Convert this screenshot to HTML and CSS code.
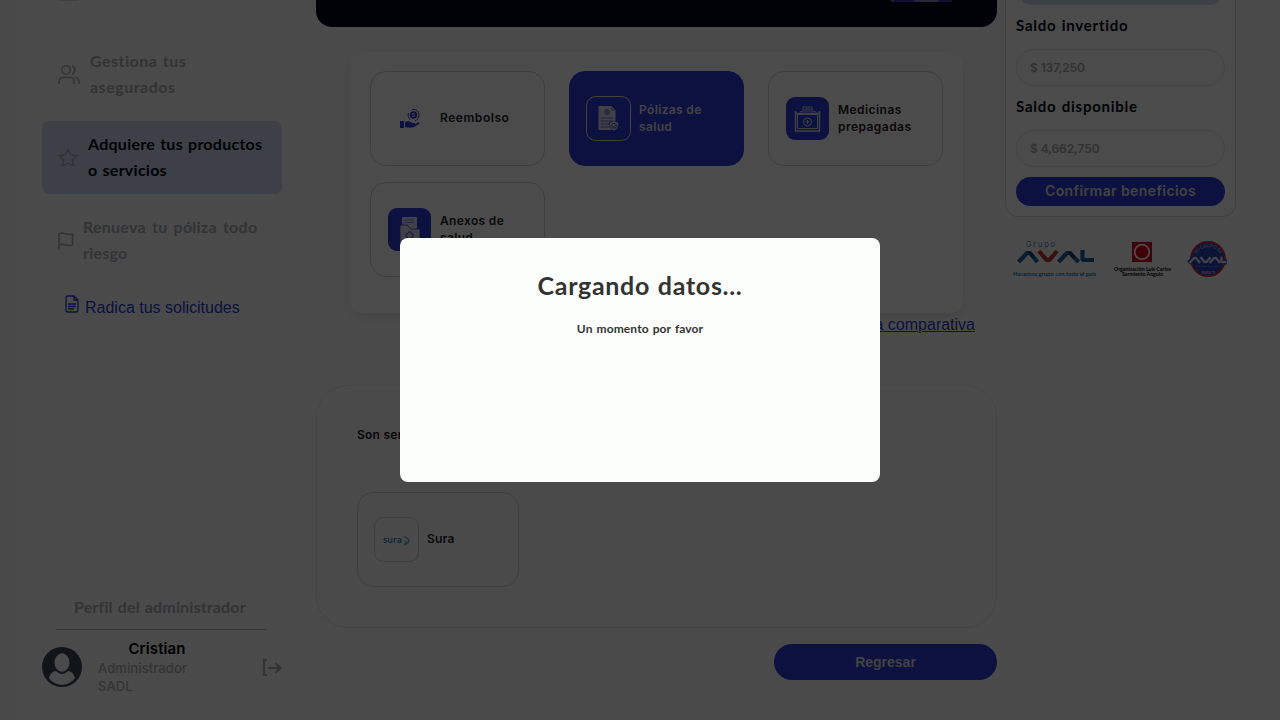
FILE: index.html
```html
<!DOCTYPE html>
<html lang="es">
<head>
<meta charset="utf-8">
<title>Productos</title>
<link rel="stylesheet" href="styles.css">
</head>
<body>
<div class="page">
  <aside class="sidebar">
    <svg class="topicon" width="20" height="2" viewBox="0 0 20 2"><path d="M1 .5h18" stroke="#d8d9dc" /></svg>
    <nav class="nav">
      <a class="item people"><svg width="22" height="22" viewBox="0 0 22 22"><circle cx="8" cy="6" r="4.2"/><path d="M1 20v-2.500a4 4 0 0 1 4-4h7a4 4 0 0 1 4 4V20M14 2a4.200 4.200 0 0 1 0 8M17.500 13.500a4 4 0 0 1 3.500 4V20"/></svg><span class="l1">Gestiona tus<br>asegurados</span></a>
      <a class="item active"><svg width="20" height="20" viewBox="0 0 20 20"><path d="M10 1.300l2.700 5.500 6 .9-4.300 4.200 1 6-5.400-2.800-5.400 2.800 1-6L1.300 7.700l6-.9z"/></svg><span class="l2">Adquiere tus productos<br>o servicios</span></a>
      <a class="item flag"><svg width="16" height="20" viewBox="0 0 16 20"><path d="M1 19V3c4-3 8 2 13.500 0v11c-5.500 2-9.500-3-13.500 0"/></svg><span class="l3">Renueva tu póliza todo<br>riesgo</span></a>
    </nav>
    <a class="radica"><svg width="14" height="18" viewBox="0 0 14 18"><path d="M1 2.500A1.500 1.500 0 0 1 2.500 1H9l4 4v10.500a1.500 1.500 0 0 1-1.500 1.500h-9A1.500 1.500 0 0 1 1 15.500zM9 1v4h4M3 9h8M3 11.500h8M3 14h6"/></svg>Radica tus solicitudes</a>
    <div class="profile-title">Perfil del administrador</div>
    <div class="profile">
      <svg class="avatar" width="40" height="40" viewBox="0 0 40 40"><circle cx="20" cy="20" r="20" fill="#394455"/><ellipse cx="20" cy="15.500" rx="7.500" ry="9.300" fill="#f9f9f9"/><path d="M7 31c1-4 4-7 7-7 4 4 8 4 12 0 3 0 6 3 7 7-6 9-20 9-26 0z" fill="#f9f9f9"/></svg>
      <div class="who"><b>Cristian</b><span>Administrador<br>SADL</span></div>
      <svg class="exit" width="20" height="18" viewBox="0 0 20 18"><path d="M5 1H2v15h3M6 9h12M13.500 4l5 5-5 5"/></svg>
    </div>
  </aside>

  <main class="main">
    <div class="banner"><svg width="62" height="2" viewBox="0 0 62 2"><path d="M0 0h62l-2 2H3z" fill="#7d84b0"/><path d="M2 0h22v2H5zM48 0h13l-2 2H50z" fill="#4428b5"/></svg></div>
    <section class="products">
      <div class="product"><svg class="ico" width="45" height="45" viewBox="0 0 45 45" fill="#2b3ad5"><path d="M13 25h4v7h-4zM18 26c4-2 6 0 8 1h2c1 2-1 2-4 2 4 0 5-2 8-3 1 1-1 3-3 4-3 2-6 2-11 1z"/><circle cx="26.500" cy="19" r="3.700"/><path d="M25 13.500a5.500 5.500 0 0 1 7 5.500c0 3-2 5-4 6M21.500 17c-1 3 0 5 2 7" fill="none" stroke="#2b3ad5"/><path d="M27.500 17.500h-2v1.500h2v1.500h-2.500" stroke="#fff" stroke-width=".6" fill="none"/></svg><span class="m1">Reembolso</span></div>
      <div class="product selected"><svg class="ico" width="45" height="45" viewBox="0 0 45 45"><rect x=".5" y=".5" width="44" height="44" rx="9" fill="none" stroke="#ddd"/><path d="M12.500 10h13l4 4v20h-17z" fill="#d6d9ef"/><path d="M26 10v4h3.500M14.500 22h13M14.500 25h12M14.500 28h10M14.500 31h10M19 16h4M21 14v4" stroke="#4a55c0" stroke-width=".8" fill="none"/><circle cx="21" cy="16" r="2.600" fill="none" stroke="#5964c9" stroke-width=".8"/><path d="M23.500 26.500l4.500-1.500 4.500 1.500c0 4-1 7-4.500 8.500-3.500-1.500-4.500-4.500-4.500-8.500z" fill="#d6d9ef" stroke="#2b3ad5" stroke-width=".6"/><circle cx="28" cy="29.800" r="2.400" fill="none" stroke="#4a55c0"/><path d="M27 30l1 1 1.500-2" stroke="#4a55c0" stroke-width=".7" fill="none"/></svg><span class="m2">Pólizas de<br>salud</span></div>
      <div class="product"><svg class="ico" width="45" height="45" viewBox="0 0 45 45"><rect x="1" y="1" width="43" height="43" rx="9" fill="#2b3ad5"/><g fill="none" stroke="#d3d6ee"><path d="M10.500 15v20h24V15M11 17.500h23" stroke-width="1.500"/><path d="M15 16l3-1h10l3 1M18 14v-3h9v3M20 14v-1h5v1"/><rect x="12.500" y="18.500" width="20" height="14"/><circle cx="22.500" cy="26" r="4"/><path d="M20.500 26h4M22.500 24v4"/></g></svg><span class="m3">Medicinas<br>prepagadas</span></div>
      <div class="product"><svg class="ico" width="45" height="45" viewBox="0 0 45 45"><rect x="1" y="1" width="43" height="43" rx="9" fill="#2b3ad5"/><path d="M15 10h15v14H15z" fill="#d6d9ef"/><path d="M17 13h10M17 15.500h10" stroke="#7780cf" stroke-width=".9"/><path d="M13 18h7l4 4h9v14H13z" fill="#d6d9ef" stroke="#2b3ad5" stroke-width=".8"/><path d="M21 25h3v2h2v3h-2v2h-3v-2h-2v-3h2z" fill="none" stroke="#4a55c0"/></svg><span class="m4">Anexos de<br>salud</span></div>
    </section>
    <a class="compare">Ver tabla comparativa</a>
    <section class="services">
      <p>Son servicios</p>
      <div class="product sura"><svg class="ico" width="45" height="45" viewBox="0 0 45 45"><rect x=".5" y=".5" width="44" height="44" rx="9" fill="none" stroke="#d0d0d0"/><text x="9" y="26" textLength="19" lengthAdjust="spacingAndGlyphs" fill="#207bc8" font-family="Open Sans" font-weight="600" font-size="9.500">sura</text><path d="M30 19l5 4-1 3-4 2c2-2 3-3 1-4" fill="none" stroke="#65b4bc" stroke-width="1.500"/></svg><span class="m5">Sura</span></div>
    </section>
    <button class="back">Regresar</button>
  </main>

  <aside class="right">
    <section class="balance">
      <div class="strip"></div>
      <h3 class="s1">Saldo invertido</h3><div class="field f1">$ 137,250</div>
      <h3 class="s2">Saldo disponible</h3><div class="field f2">$ 4,662,750</div>
      <button class="confirm">Confirmar beneficios</button>
    </section>
    <svg class="logos" width="231" height="48" viewBox="0 0 231 48" font-family="Lato">
      <text x="21" y="14" font-size="7.500" fill="#477fc6" textLength="29" font-family="Inter">Grupo</text>
      <g fill="none" stroke-width="4.200" stroke-linejoin="bevel"><path d="M13.500 29l8.500-9h3l7.500 9" stroke="#1d5f9f"/><path d="M34 18l7.500 9h3l7.500-9" stroke="#bd382c"/><path d="M53.500 29l8.500-9h3l8.500 9M77.500 17v10H89" stroke="#1d5f9f"/><path d="M23 20h2l4 5M63 20h2l4 5" stroke="#173e69" stroke-width="3"/></g>
      <text x="8" y="43" font-size="6.300" font-weight="700" fill="#2b71b2" textLength="83" lengthAdjust="spacingAndGlyphs">Hacemos grupo con todo el país</text>
      <rect x="127" y="9" width="20" height="20" fill="#d80020"/><circle cx="137" cy="19" r="7.300" fill="none" stroke="#fff" stroke-width="1.700"/>
      <text x="109" y="38" font-size="5.200" font-weight="700" textLength="57" lengthAdjust="spacingAndGlyphs">Organización Luis Carlos</text><text x="117" y="43" font-size="5.200" font-weight="700" textLength="41" lengthAdjust="spacingAndGlyphs">Sarmiento Angulo</text>
      <circle cx="203" cy="26" r="17" fill="#2542b7" stroke="#d6203b" stroke-width="1.800"/>
      <g fill="none" stroke-linejoin="bevel"><path d="M184 30l5-5h2l5 5M195 24l4 5h2l5-5M204 30l5-5h2l5 5M216 23v6h6" stroke="#2542b7" stroke-width="5"/><path d="M184.500 30l4.500-5h2l4 5M195.500 24l4 5h2l4-5M204.500 30l4.500-5h2l4 5M216.500 23.500v5.500h5" stroke="#d7dcf0" stroke-width="2.300"/></g>
      <path id="arc" d="M191 23a13 12 0 0 1 25 0" fill="none"/><text font-size="4.500" font-weight="700" fill="#a8b5de"><textPath href="#arc" startOffset="2" textLength="28">MI GRUPO ES</textPath></text>
      <path d="M191 33.500h24" stroke="#7c8dca" stroke-width=".8" stroke-dasharray="1 .5"/><text x="196" y="40.500" font-size="4.500" font-weight="700" fill="#a8b5de" textLength="14">PARA TI</text>
    </svg>
  </aside>
</div>
<div class="overlay"><div class="modal"><h1><span>Cargando datos...</span></h1><p><span>Un momento por favor</span></p></div></div>
</body>
</html>
```
FILE: styles.css
```css
* { box-sizing: border-box; }
body { margin: 0; height: 720px; overflow: hidden; background: #f7f7f7; font-family: "Liberation Sans", sans-serif; }
h1, h3, p { margin: 0; }
button { border: 0; }
span, h3, .profile-title { white-space: nowrap; }
.page { display: flex; height: 720px; padding-left: 20px; background: linear-gradient(90deg, #f3f3f3 20px, #f8f8f8 20px); }
.sidebar { width: 280px; padding: 0 18px 0 22px; display: flex; flex-direction: column; background: #f9f9f9; }
.topicon { display: block; margin-left: 17px; }
.nav { display: flex; flex-direction: column; gap: 10px; margin-top: 36px; }
.item { height: 73px; display: flex; align-items: center; padding-left: 16px; color: #a9abb0; font: 700 16px/26px Lato, sans-serif; border-radius: 7px; }
.item svg, .radica svg, .exit { fill: none; stroke: #a9abb0; stroke-width: 1.600; }
.item span { padding-bottom: 2px; }
.people span { margin-left: 10px; }
.active { background: #cdd5ea; color: #000a16; }
.active span { margin-left: 10px; }
.flag span { margin-left: 9px; }
.l1 { letter-spacing: .5px; word-spacing: 1px; }
.l2 { letter-spacing: .25px; word-spacing: 1px; }
.l3 { letter-spacing: .25px; word-spacing: 2px; }
.radica { display: flex; margin: 18px 0 0 23px; gap: 6px; font-size: 16px; line-height: 25px; color: #2b3ad5; }
.radica svg { stroke: #2b3ad5; stroke-width: 1.300; }
.profile-title { margin: auto 15px 0 14px; height: 34px; padding-left: 18px; border-bottom: 1px solid #aeb4c1; color: #a9abb0; font: 700 16px/21px Lato, sans-serif; letter-spacing: .15px; word-spacing: 1px; }
.profile { height: 90px; display: flex; padding-top: 10px; }
.avatar { margin-top: 7px; }
.who { width: 118px; margin-left: 16px; display: flex; flex-direction: column; font: 500 13px/18px Inter, sans-serif; color: #a9abb0; letter-spacing: .1px; }
.who b { font-size: 15px; line-height: 18px; padding-bottom: 1px; color: #000; font-weight: 600; text-align: center; }
.exit { margin: 19px 0 0 auto; stroke-width: 2.200; flex: none; }
.main { width: 681px; margin-left: 16px; display: flex; flex-direction: column; flex: none; }
.banner { height: 27px; background: #00081a; border-radius: 0 0 16px 16px; flex: none; }
.banner svg { display: block; margin-left: 574px; }
.products { margin: 25px 34px 0; height: 261px; padding: 19px 20px; display: grid; grid-template-columns: repeat(3, 175px); grid-auto-rows: 95px; gap: 16px 24px; background: #fcfcfc; border-radius: 12px; box-shadow: 0 4px 8px #00000014; flex: none; }
.product { display: flex; align-items: center; gap: 8px; padding-left: 16px; border: 1px solid #d0d0d0; border-radius: 16px; color: #222; font: 600 12px/17px Inter, sans-serif; }
.product span { padding-bottom: 2px; }
.m1 { letter-spacing: .55px; }
.m2, .m4 { letter-spacing: .35px; }
.m3 { letter-spacing: .45px; }
.m5 { letter-spacing: .2px; }
.ico { flex: none; }
.selected { background: #2b3ad5; border-color: #2b3ad5; color: #dde; }
.compare { align-self: flex-end; margin: 2px 22px 0 0; font-size: 16px; line-height: 20px; color: #2b3ad5; text-decoration: underline; }
.services { margin-top: 50px; height: 243px; flex: none; border: 1px solid #e4e4e4; border-radius: 32px; padding: 40px; }
.services p { font: 600 12px/18px Inter, sans-serif; letter-spacing: .25px; color: #111; margin-bottom: 48px; }
.sura { width: 162px; height: 95px; }
.back { align-self: flex-end; width: 223px; height: 36px; flex: none; margin-top: 16px; border-radius: 18px; background: #2b3ad5; color: #ddd; font: 700 14px "Liberation Sans", sans-serif; }
.right { width: 231px; margin-left: 8px; flex: none; }
.balance { height: 217px; border: 1px solid #d5d5d5; border-top: 0; border-radius: 0 0 14px 14px; padding: 0 10px; background: #fafafa; }
.strip { height: 5px; margin: 0 6px; background: #cdd5ea; border-radius: 0 0 12px 12px / 0 0 5px 5px; }
.balance h3 { height: 31px; padding-top: 10px; color: #000a16; font: 700 15px/20px Lato, sans-serif; letter-spacing: .75px; word-spacing: 1px; }
.field { height: 37px; margin-top: 13px; border: 1px solid #e5e5e5; border-radius: 19px; padding-left: 13px; color: #a5a5a8; font: 600 12px/35px Inter, sans-serif; letter-spacing: -.1px; }
.confirm { display: block; width: 209px; height: 29px; margin-top: 10px; padding: 0 0 2px; border-radius: 15px; background: #2b3ad5; color: #ddd; font: 600 14px Inter, sans-serif; letter-spacing: .4px; }
.logos { display: block; margin-top: 16px; }
.overlay { position: fixed; inset: 0; background: rgba(0, 0, 0, .7); display: flex; align-items: center; justify-content: center; }
.modal { width: 480px; height: 244px; border-radius: 8px; background: #fbfdfa; text-align: center; color: #333; font-family: Lato, sans-serif; padding-top: 29px; }
.modal h1 { font-size: 25px; line-height: 36px; letter-spacing: .7px; word-spacing: 1px; }
.modal p { margin-top: 17px; font-size: 12px; line-height: 18px; font-weight: 700; letter-spacing: .1px; word-spacing: 1px; }
```
